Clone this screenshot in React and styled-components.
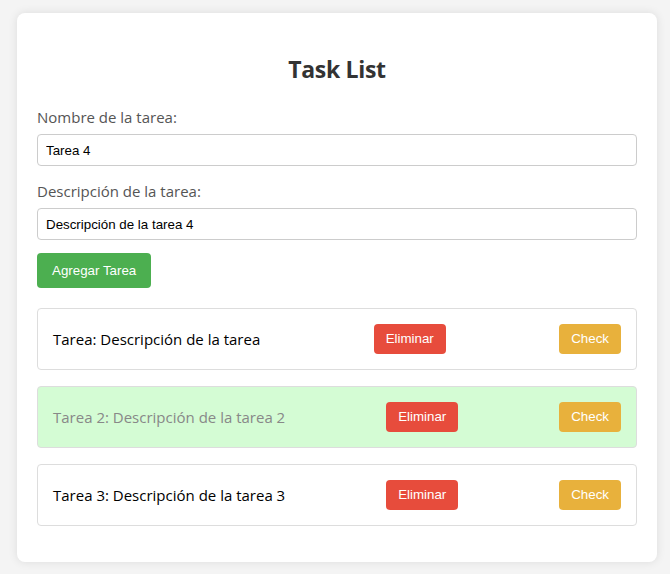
import React, { useState } from 'react';
import styled, { createGlobalStyle } from 'styled-components';

const GlobalStyle = createGlobalStyle`
  body {
    margin: 0;
    padding: 13px 13px 12px 17px;
    background-color: #f4f4f4;
    font-family: "Open Sans", "Noto Sans", sans-serif;
  }
`;

const Container = styled.div`
  background-color: #fff;
  padding: 20px;
  border-radius: 8px;
  box-shadow: 0 0 10px rgba(0, 0, 0, 0.1);
`;

const Title = styled.h2`
  font-size: 23px;
  line-height: 32px;
  margin: 20px 0 22px;
  text-align: center;
  color: #333;
  font-weight: 700;
  letter-spacing: -0.3px;
`;

const FormGroup = styled.div`
  margin-bottom: 15px;

  &:last-of-type {
    margin-bottom: 13px;
  }
`;

const Label = styled.label`
  display: block;
  font-size: 15px;
  line-height: 20px;
  color: #555;
  margin-bottom: 7px;
`;

const Input = styled.input`
  display: block;
  box-sizing: border-box;
  width: 100%;
  height: 32px;
  padding: 0 8px;
  border: 1px solid #ccc;
  border-radius: 4px;
  font-family: "Liberation Sans", Arial, sans-serif;
  font-size: 13.33px;
  color: #000;
`;

const Button = styled.button`
  background-color: ${(p) => p.$bg};
  color: #fff;
  border: none;
  border-radius: 4px;
  padding: ${(p) => (p.$big ? '10px 15px' : '7px 12px')};
  font-family: "Liberation Sans", Arial, sans-serif;
  font-size: 13.33px;
  line-height: ${(p) => (p.$big ? '15px' : '16px')};
  cursor: pointer;
`;

const List = styled.ul`
  list-style: none;
  margin: 20px 0 0;
  padding: 0;
`;

const Item = styled.li`
  display: flex;
  align-items: center;
  justify-content: space-between;
  padding: 15px;
  margin-bottom: 16px;
  border: 1px solid #ddd;
  border-radius: 4px;
  background-color: ${(p) => (p.$done ? '#d4fcd4' : '#fff')};
`;

const ItemText = styled.span`
  font-size: 15px;
  color: ${(p) => (p.$done ? '#888' : '#000')};
`;

const initialTasks = [
  { name: 'Tarea', desc: 'Descripción de la tarea', done: false },
  { name: 'Tarea 2', desc: 'Descripción de la tarea 2', done: true },
  { name: 'Tarea 3', desc: 'Descripción de la tarea 3', done: false },
];

const App = () => {
  const [name, setName] = useState('Tarea 4');
  const [desc, setDesc] = useState('Descripción de la tarea 4');
  const [tasks, setTasks] = useState(initialTasks);

  const addTask = () => {
    if (!name) return;
    setTasks([...tasks, { name, desc, done: false }]);
  };

  const removeTask = (i) => setTasks(tasks.filter((_, idx) => idx !== i));

  const toggleTask = (i) =>
    setTasks(tasks.map((t, idx) => (idx === i ? { ...t, done: !t.done } : t)));

  return (
    <>
      <GlobalStyle />
      <Container>
        <Title>Task List</Title>
        <FormGroup>
          <Label>Nombre de la tarea:</Label>
          <Input value={name} onChange={(e) => setName(e.target.value)} />
        </FormGroup>
        <FormGroup>
          <Label>Descripción de la tarea:</Label>
          <Input value={desc} onChange={(e) => setDesc(e.target.value)} />
        </FormGroup>
        <Button $big $bg="#4caf50" onClick={addTask}>Agregar Tarea</Button>
        <List>
          {tasks.map((t, i) => (
            <Item key={i} $done={t.done}>
              <ItemText $done={t.done}>{t.name}: {t.desc}</ItemText>
              <Button $bg="#e74c3c" onClick={() => removeTask(i)}>Eliminar</Button>
              <Button $bg="#e8b13c" onClick={() => toggleTask(i)}>Check</Button>
            </Item>
          ))}
        </List>
      </Container>
    </>
  );
};

export default App;
